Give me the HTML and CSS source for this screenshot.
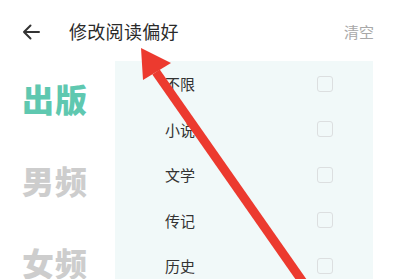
FILE: index.html
```html
<!DOCTYPE html>
<html lang="zh">
<head>
<meta charset="utf-8">
<link rel="stylesheet" href="styles.css">
</head>
<body>
<div class="page">
  <header class="topbar">
    <svg class="back" width="18" height="16" viewBox="0 0 18 16"><path d="M17 8H2M8.5 1.5L2 8l6.5 6.5" fill="none" stroke="#333" stroke-width="2" stroke-linecap="round" stroke-linejoin="round"/></svg>
    <div class="title">修改阅读偏好</div>
    <div class="clear">清空</div>
  </header>
  <main class="body">
    <nav class="cats">
      <div class="cat active">出版</div>
      <div class="cat">男频</div>
      <div class="cat">女频</div>
    </nav>
    <section class="panel">
      <div class="row"><span>不限</span><i class="box"></i></div>
      <div class="row"><span>小说</span><i class="box"></i></div>
      <div class="row"><span>文学</span><i class="box"></i></div>
      <div class="row"><span>传记</span><i class="box"></i></div>
      <div class="row"><span>历史</span><i class="box"></i></div>
    </section>
  </main>
  <svg class="annot" width="400" height="279" viewBox="0 0 400 279">
    <line x1="156" y1="72" x2="305" y2="285" stroke="#ec3a2f" stroke-width="9" stroke-linecap="butt"/>
    <polygon points="141,48 143,80 171,63" fill="#ec3a2f"/>
  </svg>
</div>
</body>
</html>
```
FILE: styles.css
```css
* { box-sizing: border-box; margin: 0; padding: 0; }
html, body { width: 400px; height: 279px; overflow: hidden; background: #fff; }
body { font-family: "Noto Sans CJK SC", "Noto Sans", sans-serif; }
.page { position: relative; width: 400px; height: 279px; overflow: hidden; }
.topbar { display: flex; align-items: center; height: 61px; padding: 0 26px 0 22px; }
.back { flex: none; margin-top: 2px; }
.title { margin-left: 29px; font-size: 18px; color: #2a2a2a; flex: 1; letter-spacing: 0.3px; }
.clear { font-size: 15px; color: #a8a8a8; margin-top: 2px; }
.body { display: flex; height: 218px; }
.cats { width: 115px; flex: none; display: flex; flex-direction: column; padding: 18px 0 0 22px; gap: 44px; }
.cat { font-size: 32px; font-weight: 900; line-height: 38px; color: #cdcdcd; letter-spacing: 1px; }
.cat.active { color: #5fc8b0; }
.panel { width: 258px; flex: none; background: #f1f9f9; padding: 0 40px 0 50px; }
.row { height: 45.5px; display: flex; align-items: center; justify-content: space-between; font-size: 15px; color: #333; }
.box { display: block; width: 16px; height: 16px; border: 1.5px solid #dcdfe0; border-radius: 3px; }
.annot { position: absolute; left: 0; top: 0; pointer-events: none; }
```
